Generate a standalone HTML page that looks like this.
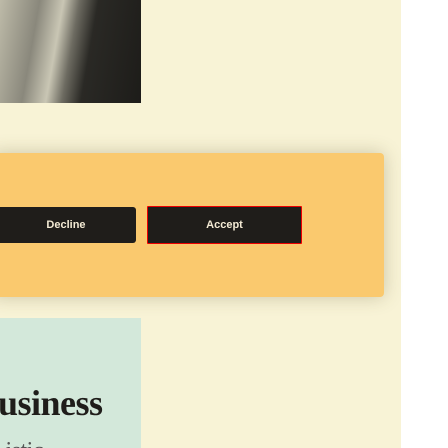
<!DOCTYPE html>
<html><head><style>
html,body{margin:0;width:448px;height:448px;overflow:hidden}
body{background:#fff;position:relative;font-family:"Liberation Sans",sans-serif}
.bg{position:absolute;left:0;top:0;width:401px;height:448px;background:#f8f3d6}
.img{position:absolute;left:0;top:0;width:141px;height:103px;background:linear-gradient(100deg,#bdbaa8 0%,#8a887c 25%,#c9c6b4 40%,#6e6c62 50%,#2a2925 62%,#1d1c19 100%)}
.mint{position:absolute;left:0;top:318px;width:141px;height:130px;background:#d3e8da;overflow:hidden}
.h{position:absolute;left:0;top:64px;font-family:"Liberation Serif",serif;font-size:36px;color:#1f1d1a;letter-spacing:-0.5px;font-weight:bold;white-space:nowrap}
.banner{position:absolute;left:-8px;top:153px;width:392px;height:144px;background:#fac96e;border-radius:4px;box-shadow:0 0 18px rgba(90,80,40,.28)}
.btn{position:absolute;background:#1f1d1a;color:#f3ead4;font-weight:bold;font-size:11px;display:flex;align-items:center;justify-content:center;border-radius:3px;box-sizing:border-box}
</style></head><body>
<div class="bg"></div>
<div class="img"></div>
<div class="mint">
<div class="h" style="left:-2px">usiness</div>
<div class="h" style="top:120px;font-size:24px;font-weight:normal;color:#555">&nbsp;istic</div>
</div>
<div class="banner"></div>
<div class="btn" style="left:-4px;top:207px;width:140px;height:36px">Decline</div>
<div class="btn" style="left:147px;top:206px;width:155px;height:38px;border:1px solid #e00;border-radius:1px">Accept</div>
</body></html>
